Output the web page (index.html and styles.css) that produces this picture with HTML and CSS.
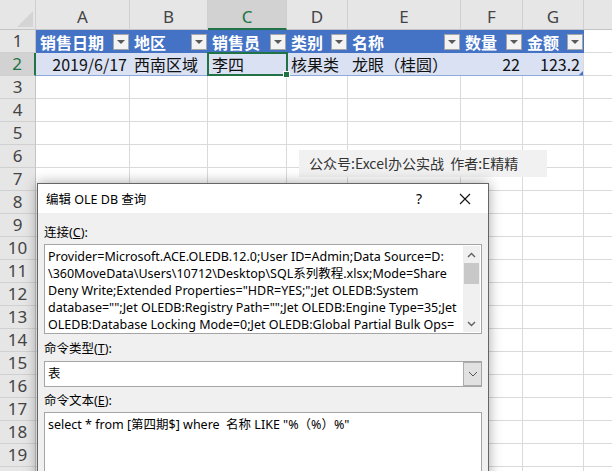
FILE: index.html
```html
<!DOCTYPE html>
<html lang="zh">
<head>
    <meta charset="UTF-8">
    <meta name="viewport" content="width=device-width, initial-scale=1.0">
    <title>编辑 OLE DB 查询</title>
    <link rel="stylesheet" href="styles.css">
</head>
<body>
    <div class="sheet" id="sheet">
        <div class="row head">
            <div class="corner">
                <svg width="16" height="16" viewBox="0 0 16 16"><polygon points="16,0 16,16 0,16" fill="#d4d4d4"/></svg>
            </div>
            <div class="col">A</div>
            <div class="col">B</div>
            <div class="col on">C</div>
            <div class="col">D</div>
            <div class="col">E</div>
            <div class="col">F</div>
            <div class="col">G</div>
            <div class="col"></div>
        </div>
        <div class="row">
            <div class="num">1</div>
            <div class="th">销售日期<span class="filter"></span></div>
            <div class="th">地区<span class="filter"></span></div>
            <div class="th">销售员<span class="filter"></span></div>
            <div class="th">类别<span class="filter"></span></div>
            <div class="th">名称<span class="filter"></span></div>
            <div class="th">数量<span class="filter"></span></div>
            <div class="th">金额<span class="filter"></span></div>
            <div class="cell"></div>
        </div>
        <div class="row">
            <div class="num on">2</div>
            <div class="td r">2019/6/17</div>
            <div class="td">西南区域</div>
            <div class="td active">李四</div>
            <div class="td">核果类</div>
            <div class="td">龙眼（桂圆）</div>
            <div class="td r">22</div>
            <div class="td r last">123.2</div>
            <div class="cell"></div>
        </div>

        <div class="note">公众号:Excel办公实战&nbsp; 作者:E精精</div>

        <div class="dialog">
            <div class="titlebar">
                <span class="title">编辑 OLE DB 查询</span>
                <span class="tbtn">?</span>
                <span class="tbtn">
                    <svg width="12" height="12" viewBox="0 0 12 12"><path d="M1 1L11 11M11 1L1 11" stroke="#111" stroke-width="1.1" fill="none"/></svg>
                </span>
            </div>
            <div class="body">
                <div class="label">连接(<u>C</u>):</div>
                <div class="box conn">
                    <div class="text">
                        <div>Provider=Microsoft.ACE.OLEDB.12.0;User ID=Admin;Data Source=D:</div>
                        <div>\360MoveData\Users\10712\Desktop\SQL系列教程.xlsx;Mode=Share</div>
                        <div>Deny Write;Extended Properties="HDR=YES;";Jet OLEDB:System</div>
                        <div>database="";Jet OLEDB:Registry Path="";Jet OLEDB:Engine Type=35;Jet</div>
                        <div>OLEDB:Database Locking Mode=0;Jet OLEDB:Global Partial Bulk Ops=</div>
                    </div>
                    <div class="scroll">
                        <span class="arrow"><svg width="9" height="6" viewBox="0 0 9 6"><path d="M1 5L4.5 1.5L8 5" stroke="#606060" stroke-width="1.4" fill="none"/></svg></span>
                        <span class="thumb"></span>
                        <span class="track"></span>
                        <span class="arrow"><svg width="9" height="6" viewBox="0 0 9 6"><path d="M1 1L4.5 4.5L8 1" stroke="#606060" stroke-width="1.4" fill="none"/></svg></span>
                    </div>
                </div>
                <div class="label">命令类型(<u>T</u>):</div>
                <div class="box select">
                    <span class="value">表</span>
                    <span class="drop"><svg width="10" height="6" viewBox="0 0 10 6"><path d="M1 1L5 5L9 1" stroke="#555" stroke-width="1" fill="none"/></svg></span>
                </div>
                <div class="label">命令文本(<u>E</u>):</div>
                <div class="box cmd">select * from [第四期$] where&nbsp; 名称 LIKE "%（%）%"</div>
            </div>
        </div>
    </div>

    <script>
        // 空白行 3-19，第 20 行只露出一点
        const sheet = document.getElementById('sheet');
        for (let i = 3; i <= 20; i++) {
            const row = document.createElement('div');
            row.className = 'row';
            row.innerHTML = `<div class="num">${i < 20 ? i : ''}</div>` + '<div class="cell"></div>'.repeat(8);
            sheet.appendChild(row);
        }
    </script>
</body>
</html>
```

FILE: styles.css
```css
body {
    margin: 0;
    background: #fff;
    font-family: "Noto Sans CJK SC", sans-serif;
    overflow: hidden;
}
.sheet {
    position: relative;
    width: 612px;
    height: 471px;
    overflow: hidden;
}
.row {
    display: grid;
    grid-template-columns: 36px 94px 78px 79px 61px 113px 62px 61px 120px;
    height: 23px;
}
.row > div {
    box-sizing: border-box;
    border-right: 1px solid #dadada;
    border-bottom: 1px solid #dadada;
    font-size: 16px;
    line-height: 22px;
    white-space: nowrap;
    overflow: hidden;
}
.row.head {
    height: 30px;
}
.row.head > div {
    background: #e6e6e6;
    border-right-color: #cfcfcf;
    border-bottom-color: #c4c4c4;
    line-height: 34px;
}
.corner {
    display: flex;
    align-items: flex-end;
    justify-content: flex-end;
    padding: 0 2px 2px 0;
}
.col {
    text-align: center;
    color: #444;
    font-family: "Noto Sans", sans-serif;
    font-size: 17px !important;
}
.col.on {
    background: #d2d2d2 !important;
    color: #217346;
    border-bottom: 2px solid #217346 !important;
}
.row .num {
    background: #e6e6e6;
    border-right-color: #c4c4c4;
    border-bottom-color: #d0d0d0;
    text-align: center;
    color: #444;
    font-family: "Noto Sans", sans-serif;
    font-size: 17px;
}
.row .num.on {
    background: #d2d2d2;
    color: #217346;
    border-right: 2px solid #217346;
}
.row .th {
    background: #4472c4;
    border: none;
    color: #fff;
    font-weight: bold;
    padding-left: 4px;
    display: flex;
    align-items: center;
    justify-content: space-between;
}
.filter {
    box-sizing: border-box;
    width: 16px;
    height: 16px;
    margin-right: 1px;
    background: #f3f3f3;
    border: 1px solid #a6a6a6;
    display: flex;
    align-items: center;
    justify-content: center;
}
.filter::after {
    content: "";
    border-left: 4px solid transparent;
    border-right: 4px solid transparent;
    border-top: 4px solid #595959;
    margin-top: 1px;
}
.row .td {
    background: #d9e1f2;
    border-right: none;
    border-bottom-color: #8ea9db;
    color: #111;
    padding: 0 3px 0 4px;
}
.row .td.r {
    text-align: right;
}
.row .td.last {
    border-right: 1px solid #dadada;
    position: relative;
}
.td.last::after {
    content: "";
    position: absolute;
    right: 0;
    bottom: 0;
    border-left: 4px solid transparent;
    border-bottom: 4px solid #4472c4;
}
.row .td.active {
    position: relative;
    overflow: visible;
    z-index: 2;
}
.td.active::before {
    content: "";
    position: absolute;
    left: -1px;
    top: -1px;
    right: -1px;
    bottom: -1px;
    border: 2px solid #217346;
}
.td.active::after {
    content: "";
    position: absolute;
    right: -3px;
    bottom: -3px;
    width: 5px;
    height: 5px;
    background: #217346;
    border: 1px solid #fff;
}

/* 水印 */
.note {
    position: absolute;
    left: 299px;
    top: 150px;
    width: 248px;
    height: 27px;
    box-sizing: border-box;
    padding-left: 10px;
    background: #f1f1f1;
    color: #333;
    font-size: 14px;
    line-height: 27px;
    z-index: 3;
}

/* 对话框 */
.dialog {
    position: absolute;
    left: 37px;
    top: 183px;
    width: 452px;
    height: 320px;
    box-sizing: border-box;
    border: 1px solid #666;
    background: #f0f0f0;
    box-shadow: 0 0 12px rgba(0, 0, 0, 0.35);
    font-family: "Noto Sans", "Noto Sans CJK SC", sans-serif;
    font-size: 12.5px;
    color: #000;
    z-index: 5;
}
.titlebar {
    height: 29px;
    background: #fff;
    display: flex;
    align-items: center;
}
.title {
    flex: 1;
    padding-left: 8px;
}
.tbtn {
    width: 46px;
    text-align: center;
    display: flex;
    justify-content: center;
    font-size: 14px;
}
.body {
    padding: 11px 6px 0 6px;
}
.label {
    line-height: 17px;
    height: 17px;
    margin-bottom: 3px;
}
.box {
    box-sizing: border-box;
    background: #fff;
    border: 1px solid #a5a5a5;
}
.conn {
    height: 90px;
    display: flex;
    margin-bottom: 6px;
}
.conn .text {
    flex: 1;
    padding: 3px 0 0 3px;
    line-height: 17px;
    white-space: nowrap;
    overflow: hidden;
}
.scroll {
    width: 17px;
    margin: 1px 1px 1px 0;
    background: #f0f0f0;
    display: flex;
    flex-direction: column;
    align-items: center;
}
.arrow {
    height: 17px;
    display: flex;
    align-items: center;
    justify-content: center;
}
.thumb {
    width: 15px;
    height: 21px;
    background: #c8c8c8;
}
.track {
    flex: 1;
}
.select {
    height: 26px;
    display: flex;
    margin-bottom: 5px;
    margin-top: 4px;
}
.select .value {
    flex: 1;
    padding-left: 3px;
    line-height: 24px;
}
.drop {
    box-sizing: border-box;
    width: 18px;
    background: #e1e1e1;
    border: 1px solid #adadad;
    border-right: none;
    display: flex;
    align-items: center;
    justify-content: center;
}
.cmd {
    height: 80px;
    padding: 3px 0 0 3px;
    line-height: 17px;
    margin-top: 1px;
}
```
